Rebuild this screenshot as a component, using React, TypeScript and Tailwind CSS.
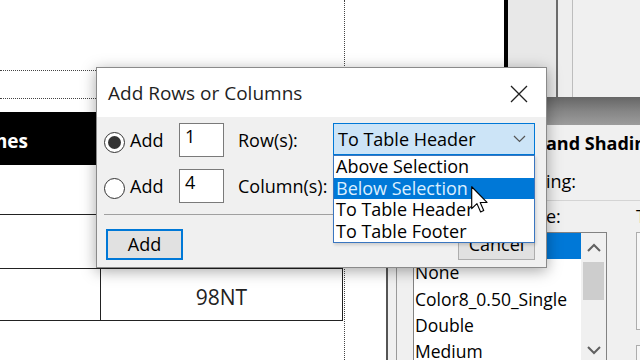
const sans = "font-['Open_Sans','Noto_Sans',sans-serif]";

function Radio({ checked = false }: { checked?: boolean }) {
  return (
    <span className="flex h-[21px] w-[21px] items-center justify-center rounded-full border border-[#333] bg-white">
      {checked && <span className="h-[13px] w-[13px] rounded-full bg-[#333]" />}
    </span>
  );
}

function NumberBox({ value }: { value: string }) {
  return (
    <div className="h-[34px] w-[45px] shrink-0 border border-[#7a7a7a] bg-white pl-[5px] leading-[24px]">
      {value}
    </div>
  );
}

interface OptionRowProps {
  checked?: boolean;
  value: string;
  unit: string;
  children?: React.ReactNode;
}

function OptionRow({ checked, value, unit, children }: OptionRowProps) {
  return (
    <div className="flex h-[34px] items-center">
      <div className="flex w-[75px] items-center gap-[5px]">
        <span className="mt-[4px]">
          <Radio checked={checked} />
        </span>
        <span>Add</span>
      </div>
      <NumberBox value={value} />
      <span className="ml-[14px] w-[95px] whitespace-nowrap">{unit}</span>
      {children}
    </div>
  );
}

function Combo() {
  return (
    <div className="flex h-[32px] w-[202px] items-center self-start border border-[#0078d7] bg-[#cce4f7] pl-[4px] pr-[8px]">
      <span>To Table Header</span>
      <svg className="ml-auto" width="13" height="8" viewBox="0 0 13 8">
        <path d="M1 1l5.5 5.5L12 1" fill="none" stroke="#555" strokeWidth="1.2" />
      </svg>
    </div>
  );
}

const dropItems = ['Above Selection', 'Below Selection', 'To Table Header', 'To Table Footer'];

function DropList() {
  return (
    <div className="absolute left-[236px] top-[87px] w-[202px] border border-[#3a76c0] bg-white leading-[21.5px] shadow-[1px_2px_3px_rgba(0,0,0,0.15)]">
      {dropItems.map((item) => (
        <div
          key={item}
          className={
            item === 'Below Selection'
              ? 'h-[21.5px] bg-[#0078d7] pl-[2px] text-[#dcefff]'
              : 'h-[21.5px] pl-[2px] text-black'
          }
        >
          {item}
        </div>
      ))}
    </div>
  );
}

function AddDialog() {
  return (
    <div className="absolute left-[96px] top-[67px] flex h-[201px] w-[451px] flex-col border border-[#8a8a8a] bg-[#f0f0f0] text-[18px] text-black shadow-[0_3px_14px_rgba(0,0,0,0.35)]">
      <div className="flex h-[49px] shrink-0 items-center bg-white pl-[11px] pr-[18px] pt-[2px]">
        <span className="text-[19px] text-[#1f1f1f]">Add Rows or Columns</span>
        <svg className="ml-auto" width="18" height="18" viewBox="0 0 18 18">
          <path d="M1 1L17 17M17 1L1 17" stroke="#1f1f1f" strokeWidth="1.3" />
        </svg>
      </div>
      <div className="flex flex-1 flex-col pl-[7px] pr-[11px] pt-[6px]">
        <OptionRow checked value="1" unit="Row(s):">
          <Combo />
        </OptionRow>
        <div className="mt-[12px]">
          <OptionRow value="4" unit="Column(s):" />
        </div>
        <div className="mt-[11px] h-px bg-[#a0a0a0]" />
        <div className="mt-[14px] flex justify-between pl-[2px]">
          <button className="h-[31px] w-[77px] border-2 border-[#0078d7] bg-[#e1e1e1]">Add</button>
          <button className="h-[31px] w-[77px] border border-[#adadad] bg-[#e1e1e1]">Cancel</button>
        </div>
      </div>
      <DropList />
    </div>
  );
}

const rulingItems = ['None', 'Color8_0.50_Single', 'Double', 'Medium'];

function RulingDialog() {
  return (
    <div className="absolute left-[386px] top-[97px] flex h-[290px] w-[300px] flex-col overflow-hidden border-l-2 border-[#555] bg-[#f0f0f0] text-[18px] text-black">
      <div className="h-[28px] shrink-0 bg-gradient-to-b from-[#666] via-[#858585] to-[#9c9c9c]" />
      <div className="flex min-w-0 flex-1">
        <div className="w-[8px] shrink-0" />
        <div className="flex min-w-0 flex-1 flex-col border-l border-[#9a9a9a]">
          <div className="flex h-[35px] items-center pt-[2px] text-[18px] font-bold">
            <div className="flex w-[149px] shrink-0 justify-end whitespace-pre">Custom Ruling </div>
            <span className="whitespace-nowrap">and Shading</span>
          </div>
          <div className="flex h-[41px] items-center border-b border-[#d4d4d4] pt-[2px]">
            <div className="flex w-[149px] shrink-0 justify-end whitespace-nowrap">Apply Rul</div>
            <span>ing:</span>
          </div>
          <div className="flex h-[31px] items-center">
            <div className="flex w-[239px] shrink-0">
              <div className="flex w-[149px] shrink-0 justify-end whitespace-nowrap">Apply Ruling Styl</div>
              <span>e:</span>
            </div>
            <span className="whitespace-nowrap">To Selected Cells:</span>
          </div>
          <div className="flex">
            <div className="ml-[16px] flex h-[132px] w-[194px] shrink-0 border border-[#828282] bg-white text-[17.5px]">
              <div className="flex flex-1 flex-col">
                <div className="flex h-[27px] items-center bg-[#0078d7] pl-[1px] text-white">From Table</div>
                {rulingItems.map((item) => (
                  <div key={item} className="flex h-[27px] items-center pl-[1px]">
                    {item}
                  </div>
                ))}
              </div>
              <div className="flex w-[25px] flex-col items-center bg-[#f0f0f0]">
                <div className="flex h-[28px] items-center">
                  <svg width="14" height="9" viewBox="0 0 14 9">
                    <path d="M1 8l6-6 6 6" fill="none" stroke="#606060" strokeWidth="2" />
                  </svg>
                </div>
                <div className="mt-[1px] h-[38px] w-[21px] bg-[#cdcdcd]" />
                <div className="mt-auto flex h-[26px] items-center">
                  <svg width="14" height="9" viewBox="0 0 14 9">
                    <path d="M1 1l6 6 6-6" fill="none" stroke="#606060" strokeWidth="2" />
                  </svg>
                </div>
              </div>
            </div>
            <div className="ml-[29px] flex shrink-0 flex-col">
              <div className="h-[98px] w-[40px] border border-[#adadad] bg-[#f7f7f7]" />
              <div className="mt-[15px] h-[40px] w-[40px] border border-[#adadad] bg-[#f7f7f7]" />
            </div>
          </div>
        </div>
      </div>
    </div>
  );
}

function DocumentPage() {
  return (
    <div className="flex w-[504px] shrink-0">
      <div className="flex w-[345px] flex-col border-r border-dotted border-[#444]">
        <div className="h-[70px]" />
        <div className="h-[28px] border-t border-dotted border-[#444]" />
        <div className="h-[14px] border-t border-dotted border-[#444]" />
        <div className="w-[343px]">
          <div className="flex h-[53px] bg-black text-white">
            <div className="flex w-[28px] shrink-0 items-center justify-end whitespace-nowrap pt-[6px] text-[19px] font-bold">
              Part Names
            </div>
          </div>
          <div className="h-[50px] border-b border-[#222]" />
          <div className="h-[54px] border-b border-[#222]" />
          <div className="flex h-[52px] border-b border-r border-[#222]">
            <div className="w-[101px] border-r border-[#222]" />
            <div className="flex flex-1 items-center justify-center pt-[6px] text-[21px] text-[#222]">98NT</div>
          </div>
        </div>
      </div>
    </div>
  );
}

function Cursor() {
  return (
    <svg className="absolute left-[471px] top-[186px]" width="17" height="27" viewBox="0 0 12 19">
      <path
        d="M0.5 0.5V16L4.2 12.4L6.8 18.3L9 17.3L6.5 11.6H11.3Z"
        fill="#fff"
        stroke="#000"
        strokeWidth="0.8"
        strokeLinejoin="round"
      />
    </svg>
  );
}

export default function App() {
  return (
    <div className={`relative h-[360px] w-[640px] overflow-hidden bg-white text-[#111] ${sans}`}>
      <div className="flex h-full">
        <DocumentPage />
        <div className="w-[4px] shrink-0 bg-black" />
        <div className="flex flex-1">
          <div className="w-[48px] bg-[#e8e8e8]" />
          <div className="w-[2px] bg-[#6b6b6b]" />
          <div className="w-[14px] bg-[#eeeeee]" />
          <div className="w-px bg-[#bdbdbd]" />
          <div className="flex-1 bg-[#f0f0f0]" />
        </div>
      </div>
      <RulingDialog />
      <AddDialog />
      <Cursor />
    </div>
  );
}
